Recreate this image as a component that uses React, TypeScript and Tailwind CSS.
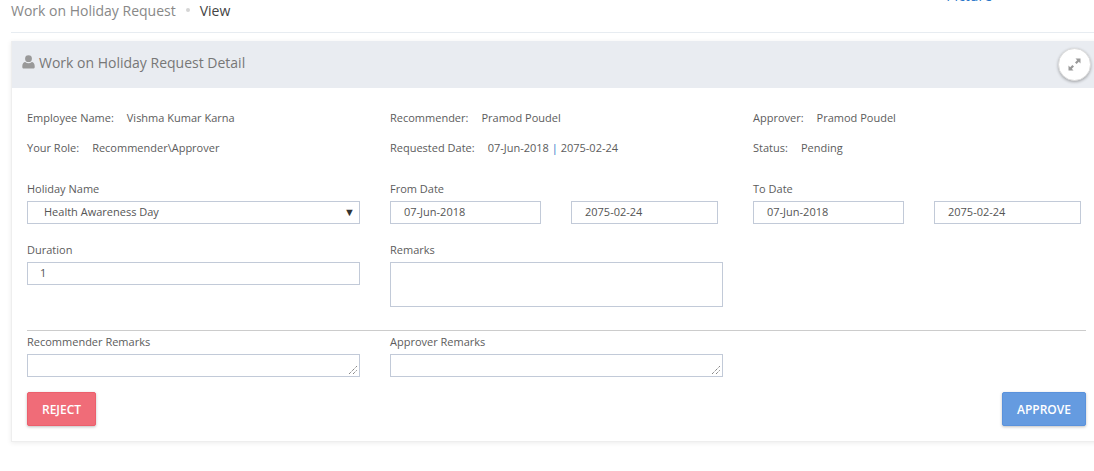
const inputCls = 'h-[23px] border border-[#c2cad8] bg-white px-[13px] flex items-center text-[11px] text-[#555]';

function Info({ label, value }: { label: string; value: React.ReactNode }) {
  return (
    <div className="h-[30px] flex items-center text-[11px] text-[#5c5c5c]">
      <span>{label}</span>
      <span className="ml-[13px]">{value}</span>
    </div>
  );
}

function Label({ children }: { children: React.ReactNode }) {
  return <div className="h-[19px] text-[11px] leading-[13px] text-[#5c5c5c]">{children}</div>;
}

function Grip() {
  return (
    <svg className="absolute right-[1px] bottom-[1px]" width="10" height="10" viewBox="0 0 10 10">
      <path d="M1 9L9 1M5 9L9 5" stroke="#555" strokeWidth="1" strokeDasharray="1 1" />
    </svg>
  );
}

export default function App() {
  return (
    <div className="w-[1094px] h-[471px] overflow-hidden bg-white font-['Open_Sans',sans-serif]">
      {/* Breadcrumb */}
      <div className="ml-[11px] h-[33px] border-b border-[#e7ecf1] flex items-start justify-between">
        <div className="flex items-center h-[20px] text-[14px]">
          <span className="text-[#888]">Work on Holiday Request</span>
          <span className="mx-[10px] w-[4px] h-[4px] rounded-full bg-[#d5d5d5]" />
          <span className="text-[#444]">View</span>
        </div>
        <span className="-mt-[13px] mr-[102px] text-[14px] leading-[18px] text-[#2a76c9]">Picture</span>
      </div>

      {/* Card */}
      <div className="ml-[11px] mt-[8px] w-[1090px] h-[401px] border-l border-b border-[#eeeeee] shadow-[0_1px_5px_rgba(0,0,0,0.08)] bg-white">
        <div className="h-[47px] bg-[#e9ecf1] flex items-center justify-between pl-[10px] pr-[10px]">
          <div className="flex items-center gap-[4px] text-[#777] -mt-[5px]">
            <svg width="13" height="14" viewBox="0 0 13 14">
              <circle cx="6.5" cy="3.7" r="3.4" fill="#999" />
              <path d="M0.3 11C0.3 8.6 1.6 7.2 3.2 7C4.2 7.8 5.3 8.2 6.5 8.2C7.7 8.2 8.8 7.8 9.8 7C11.4 7.2 12.7 8.6 12.7 11V12C12.7 13 12 13.6 11 13.6H2C1 13.6 0.3 13 0.3 12Z" fill="#999" />
            </svg>
            <span className="text-[14px]">Work on Holiday Request Detail</span>
          </div>
          <div className="w-[33px] h-[33px] rounded-full bg-white border border-[#ddd] shadow-[0_1px_3px_rgba(0,0,0,0.3)] flex items-center justify-center">
            <svg width="13" height="13" viewBox="0 0 13 13">
              <path d="M7.5 0.5H12.5V5.5L10.8 3.8L8.6 6L7 4.4L9.2 2.2Z" fill="#999" />
              <path d="M5.5 12.5H0.5V7.5L2.2 9.2L4.4 7L6 8.6L3.8 10.8Z" fill="#999" />
            </svg>
          </div>
        </div>

        <div className="pt-[15px] pl-[15px]">
          <div className="grid grid-cols-[333px_333px_333px] gap-x-[30px]">
            <Info label="Employee Name:" value="Vishma Kumar Karna" />
            <Info label="Recommender:" value="Pramod Poudel" />
            <Info label="Approver:" value="Pramod Poudel" />
            <Info label="Your Role:" value="Recommender\Approver" />
            <Info label="Requested Date:" value={<>07-Jun-2018 <span className="text-[#2a76c9]">|</span> 2075-02-24</>} />
            <Info label="Status:" value="Pending" />
          </div>

          <div className="mt-[19px] grid grid-cols-[333px_333px_333px] gap-x-[30px]">
            <div>
              <Label>Holiday Name</Label>
              <div className={`${inputCls} justify-between pl-[16px] pr-[4px]`}>
                <span>Health Awareness Day</span>
                <span className="text-[11px] text-[#333]">▼</span>
              </div>
            </div>
            <div>
              <Label>From Date</Label>
              <div className="flex">
                <div className={`${inputCls} w-[151px]`}>07-Jun-2018</div>
                <div className={`${inputCls} w-[147px] ml-[30px]`}>2075-02-24</div>
              </div>
            </div>
            <div>
              <Label>To Date</Label>
              <div className="flex">
                <div className={`${inputCls} w-[151px]`}>07-Jun-2018</div>
                <div className={`${inputCls} w-[147px] ml-[30px]`}>2075-02-24</div>
              </div>
            </div>
          </div>

          <div className="mt-[19px] grid grid-cols-[333px_333px_333px] gap-x-[30px]">
            <div>
              <Label>Duration</Label>
              <div className={`${inputCls} pl-[12px]`}>1</div>
            </div>
            <div>
              <Label>Remarks</Label>
              <div className="h-[45px] border border-[#c2cad8]" />
            </div>
          </div>

          <div className="mt-[23px] w-[1059px] border-t border-[#cccccc]" />

          <div className="mt-[3px] grid grid-cols-[333px_333px_333px] gap-x-[30px]">
            <div>
              <div className="h-[20px] text-[11px] leading-[15px] text-[#5c5c5c]">Recommender Remarks</div>
              <div className="relative h-[23px] border border-[#c2cad8]"><Grip /></div>
            </div>
            <div>
              <div className="h-[20px] text-[11px] leading-[15px] text-[#5c5c5c]">Approver Remarks</div>
              <div className="relative h-[23px] border border-[#c2cad8]"><Grip /></div>
            </div>
          </div>

          <div className="mt-[15px] w-[1059px] flex justify-between">
            <button className="w-[69px] h-[34px] pt-[1px] rounded-[2px] bg-[#f06c78] border border-[#ec5f6c] shadow-[0_1px_3px_rgba(0,0,0,0.25)] text-white text-[12px] font-semibold">REJECT</button>
            <button className="w-[84px] h-[34px] pt-[1px] rounded-[2px] bg-[#659be0] border border-[#5a92dc] shadow-[0_1px_3px_rgba(0,0,0,0.25)] text-white text-[12px] font-semibold">APPROVE</button>
          </div>
        </div>
      </div>
    </div>
  );
}
